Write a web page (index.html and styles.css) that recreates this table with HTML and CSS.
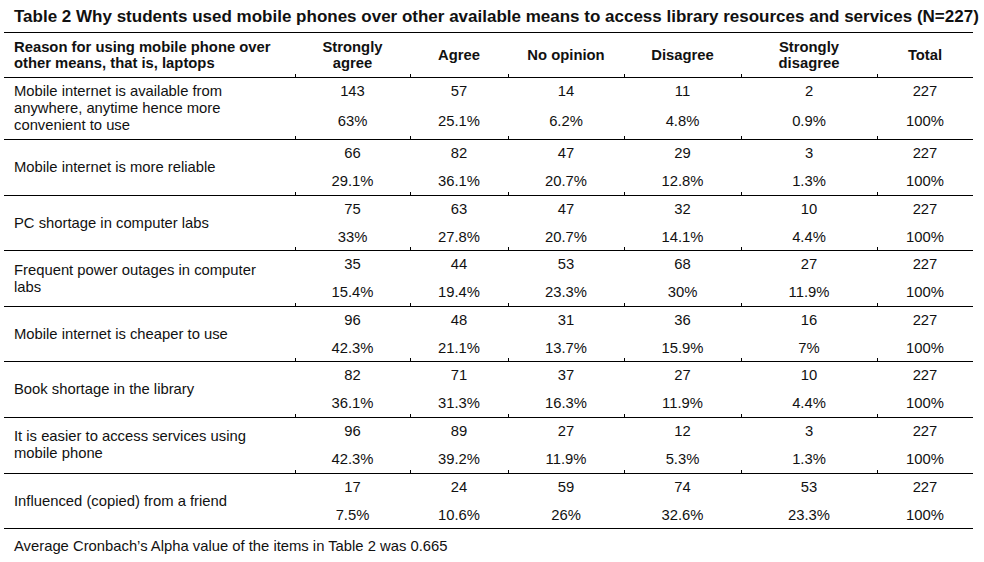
FILE: index.html
```html
<!DOCTYPE html>
<html lang="en">
<head>
<meta charset="utf-8">
<title>Table 2</title>
<link rel="stylesheet" href="styles.css">
</head>
<body>
<div class="page">
  <h1 class="caption">Table 2 Why students used mobile phones over other available means to access library resources and services (N=227)</h1>
  <table class="data">
    <colgroup>
      <col class="c-label"><col class="c1"><col class="c2"><col class="c3"><col class="c4"><col class="c5"><col class="c6">
    </colgroup>
    <thead>
      <tr>
        <th class="label">Reason for using mobile phone over<br>other means, that is, laptops</th>
        <th>Strongly<br>agree</th>
        <th>Agree</th>
        <th>No opinion</th>
        <th>Disagree</th>
        <th>Strongly<br>disagree</th>
        <th>Total</th>
      </tr>
    </thead>
    <tbody>
      <tr class="tall">
        <td class="label">Mobile internet is available from<br>anywhere, anytime hence more<br>convenient to use</td>
        <td><div class="n">143</div><div class="p">63%</div></td>
        <td><div class="n">57</div><div class="p">25.1%</div></td>
        <td><div class="n">14</div><div class="p">6.2%</div></td>
        <td><div class="n">11</div><div class="p">4.8%</div></td>
        <td><div class="n">2</div><div class="p">0.9%</div></td>
        <td><div class="n">227</div><div class="p">100%</div></td>
      </tr>
      <tr>
        <td class="label">Mobile internet is more reliable</td>
        <td><div class="n">66</div><div class="p">29.1%</div></td>
        <td><div class="n">82</div><div class="p">36.1%</div></td>
        <td><div class="n">47</div><div class="p">20.7%</div></td>
        <td><div class="n">29</div><div class="p">12.8%</div></td>
        <td><div class="n">3</div><div class="p">1.3%</div></td>
        <td><div class="n">227</div><div class="p">100%</div></td>
      </tr>
      <tr>
        <td class="label">PC shortage in computer labs</td>
        <td><div class="n">75</div><div class="p">33%</div></td>
        <td><div class="n">63</div><div class="p">27.8%</div></td>
        <td><div class="n">47</div><div class="p">20.7%</div></td>
        <td><div class="n">32</div><div class="p">14.1%</div></td>
        <td><div class="n">10</div><div class="p">4.4%</div></td>
        <td><div class="n">227</div><div class="p">100%</div></td>
      </tr>
      <tr>
        <td class="label">Frequent power outages in computer<br>labs</td>
        <td><div class="n">35</div><div class="p">15.4%</div></td>
        <td><div class="n">44</div><div class="p">19.4%</div></td>
        <td><div class="n">53</div><div class="p">23.3%</div></td>
        <td><div class="n">68</div><div class="p">30%</div></td>
        <td><div class="n">27</div><div class="p">11.9%</div></td>
        <td><div class="n">227</div><div class="p">100%</div></td>
      </tr>
      <tr>
        <td class="label">Mobile internet is cheaper to use</td>
        <td><div class="n">96</div><div class="p">42.3%</div></td>
        <td><div class="n">48</div><div class="p">21.1%</div></td>
        <td><div class="n">31</div><div class="p">13.7%</div></td>
        <td><div class="n">36</div><div class="p">15.9%</div></td>
        <td><div class="n">16</div><div class="p">7%</div></td>
        <td><div class="n">227</div><div class="p">100%</div></td>
      </tr>
      <tr>
        <td class="label">Book shortage in the library</td>
        <td><div class="n">82</div><div class="p">36.1%</div></td>
        <td><div class="n">71</div><div class="p">31.3%</div></td>
        <td><div class="n">37</div><div class="p">16.3%</div></td>
        <td><div class="n">27</div><div class="p">11.9%</div></td>
        <td><div class="n">10</div><div class="p">4.4%</div></td>
        <td><div class="n">227</div><div class="p">100%</div></td>
      </tr>
      <tr>
        <td class="label">It is easier to access services using<br>mobile phone</td>
        <td><div class="n">96</div><div class="p">42.3%</div></td>
        <td><div class="n">89</div><div class="p">39.2%</div></td>
        <td><div class="n">27</div><div class="p">11.9%</div></td>
        <td><div class="n">12</div><div class="p">5.3%</div></td>
        <td><div class="n">3</div><div class="p">1.3%</div></td>
        <td><div class="n">227</div><div class="p">100%</div></td>
      </tr>
      <tr class="last">
        <td class="label">Influenced (copied) from a friend</td>
        <td><div class="n">17</div><div class="p">7.5%</div></td>
        <td><div class="n">24</div><div class="p">10.6%</div></td>
        <td><div class="n">59</div><div class="p">26%</div></td>
        <td><div class="n">74</div><div class="p">32.6%</div></td>
        <td><div class="n">53</div><div class="p">23.3%</div></td>
        <td><div class="n">227</div><div class="p">100%</div></td>
      </tr>
    </tbody>
  </table>
  <p class="note">Average Cronbach’s Alpha value of the items in Table 2 was 0.665</p>
</div>
</body>
</html>
```

FILE: styles.css
```css
html, body {
  margin: 0;
  padding: 0;
  background: #ffffff;
}

body {
  font-family: "Liberation Sans", Arial, sans-serif;
  color: #111111;
}

.page {
  padding: 8px 11px 0 4px;
}

.caption {
  margin: 0 0 6px 10px;
  font-size: 17px;
  line-height: 18px;
  font-weight: bold;
  white-space: nowrap;
}

.data {
  width: 969px;
  border-collapse: collapse;
  table-layout: fixed;
  font-size: 14.8px;
}

.c-label { width: 291px; }
.c1 { width: 115px; }
.c2 { width: 98px; }
.c3 { width: 116px; }
.c4 { width: 117px; }
.c5 { width: 136px; }
.c6 { width: 96px; }

.data thead tr {
  border-top: 1px solid #000;
  border-bottom: 1px solid #000;
}

.data th {
  height: 44px;
  padding: 0;
  font-weight: bold;
  line-height: 16px;
  text-align: center;
  vertical-align: middle;
}

.data th.label {
  text-align: left;
  padding-left: 10px;
}

.data tbody tr {
  border-bottom: 1px solid #000;
}

.data td {
  padding: 5px 0 4.6px;
  text-align: center;
  vertical-align: top;
  line-height: 17px;
}

.data td.label {
  text-align: left;
  padding-left: 10px;
  vertical-align: middle;
}

.data th + th,
.data tbody tr:not(.last) td + td {
  background: linear-gradient(#000, #000) left bottom / 1px 3px no-repeat;
}

.data tr.tall td {
  padding-top: 5px;
  padding-bottom: 5px;
}

.data .n {
  margin-bottom: 11px;
}

.data tr.tall .n {
  margin-bottom: 13px;
}

.note {
  margin: 9px 0 0 10px;
  font-size: 14.8px;
  line-height: 17px;
}
```
